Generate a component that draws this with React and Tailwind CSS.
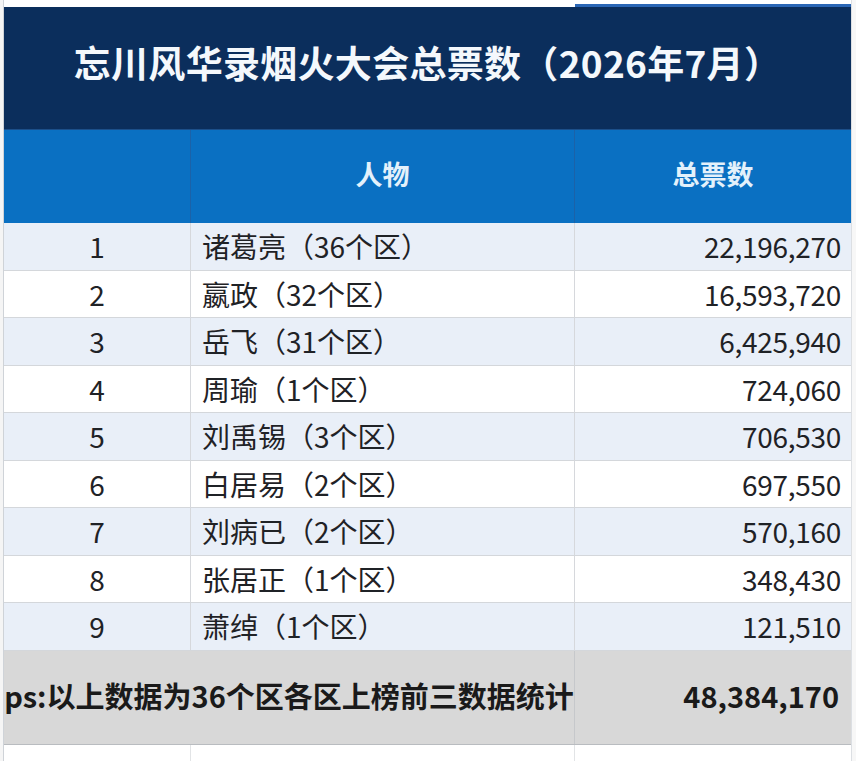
import React from "react"

const rows = [
  { rank: 1, name: "诸葛亮（36个区）", votes: "22,196,270" },
  { rank: 2, name: "嬴政（32个区）", votes: "16,593,720" },
  { rank: 3, name: "岳飞（31个区）", votes: "6,425,940" },
  { rank: 4, name: "周瑜（1个区）", votes: "724,060" },
  { rank: 5, name: "刘禹锡（3个区）", votes: "706,530" },
  { rank: 6, name: "白居易（2个区）", votes: "697,550" },
  { rank: 7, name: "刘病已（2个区）", votes: "570,160" },
  { rank: 8, name: "张居正（1个区）", votes: "348,430" },
  { rank: 9, name: "萧绰（1个区）", votes: "121,510" },
]

const font = { fontFamily: '"Noto Sans CJK SC", "Noto Sans", sans-serif' }

export default function App() {
  return (
    <div className="w-[856px] h-[761px] bg-white flex overflow-hidden text-[#1f2226]" style={font}>
      {/* left gutter */}
      <div className="w-[4px] shrink-0 bg-[#f5f5f5] border-r border-[#cfd3d8]" />

      <div className="w-[847px] shrink-0 flex flex-col">
        {/* top strip */}
        <div className="h-[7px] grid grid-cols-[571px_276px]">
          <div className="bg-white" />
          <div className="bg-white flex flex-col justify-end">
            <div className="h-[3px] bg-[#2a66b5]" />
          </div>
        </div>

        {/* title */}
        <div className="h-[123px] bg-[#0b2e5c] flex items-center justify-center border-b border-[#1c4f8a]">
          <h1 className="text-[37px] font-bold text-[#f4f8fc] tracking-[0.3px] pb-[10px]">
            忘川风华录烟火大会总票数（2026年7月）
          </h1>
        </div>

        {/* column header */}
        <div className="h-[93px] grid grid-cols-[187px_384px_276px] bg-[#0a70c2]">
          <div className="border-r border-[#1b62a8]" />
          <div className="flex items-center justify-center border-r border-[#1b62a8] text-[27px] font-bold text-[#e3f1fb] pb-[4px]">
            人物
          </div>
          <div className="flex items-center justify-center text-[27px] font-bold text-[#e3f1fb] pb-[4px]">
            总票数
          </div>
        </div>

        {/* rows */}
        {rows.map((r) => (
          <div
            key={r.rank}
            className={
              "h-[47.5px] grid grid-cols-[187px_384px_276px] border-b border-[#d4d7db] text-[28px] " +
              (r.rank % 2 === 1 ? "bg-[#e9eff8]" : "bg-white")
            }
          >
            <div className="flex items-center justify-center border-r border-[#d6d8dc]">{r.rank}</div>
            <div className="flex items-center pl-[11px] border-r border-[#d6d8dc]">{r.name}</div>
            <div className="flex items-center justify-end pr-[10px] tracking-[-0.3px]">{r.votes}</div>
          </div>
        ))}

        {/* footer */}
        <div className="h-[94px] grid grid-cols-[571px_276px] bg-[#d8d8d8] border-b border-[#b9bcc0] text-[#1a1a1a]">
          <div className="flex items-center justify-center border-r border-[#c6c8cb] text-[29px] font-bold whitespace-nowrap pb-[2px]">
            ps:以上数据为36个区各区上榜前三数据统计
          </div>
          <div className="flex items-center justify-end pr-[12px] text-[29px] font-bold pb-[2px]">
            48,384,170
          </div>
        </div>

        {/* below table */}
        <div className="flex-1 grid grid-cols-[187px_384px_276px] bg-white">
          <div className="border-r border-[#e2e4e6]" />
          <div className="border-r border-[#e2e4e6]" />
          <div />
        </div>
      </div>

      {/* right gutter */}
      <div className="flex-1 bg-[#f7f7f7] border-l border-[#dcdfe3]" />
    </div>
  )
}
